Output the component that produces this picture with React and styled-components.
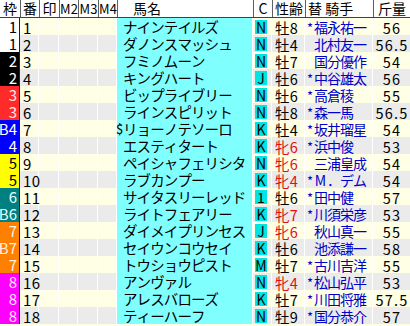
import React from "react";
import styled, { createGlobalStyle } from "styled-components";

const GlobalStyle = createGlobalStyle`
  html, body {
    margin: 0;
    padding: 0;
    background: #ffffe6;
  }
  body {
    font-family: "Noto Sans CJK JP", "DejaVu Sans", sans-serif;
  }
`;

const COLS = "20px 19px 20px 19px 20px 19px 136px 19px 33px 68px 37px";

const WAKU = {
  1: { bg: "#ffffff", fg: "#000000" },
  2: { bg: "#000000", fg: "#ffffff" },
  3: { bg: "#ff2b2b", fg: "#ffe8e8" },
  4: { bg: "#0000ff", fg: "#ffffff" },
  5: { bg: "#ffff00", fg: "#000000" },
  6: { bg: "#008080", fg: "#e8ffff" },
  7: { bg: "#ff8000", fg: "#fff4e0" },
  8: { bg: "#ff00ff", fg: "#ffe8ff" },
};

const horses = [
  { w: "1", n: 1, name: "ナインテイルズ", c: "N", sa: "牡8", f: false, m: true, j: "福永祐一", k: "56" },
  { w: "1", n: 2, name: "ダノンスマッシュ", c: "N", sa: "牡4", f: false, m: false, j: "北村友一", k: "56.5" },
  { w: "2", n: 3, name: "フミノムーン", c: "N", sa: "牡7", f: false, m: false, j: "国分優作", k: "54" },
  { w: "2", n: 4, name: "キングハート", c: "J", sa: "牡6", f: false, m: true, j: "中谷雄太", k: "56" },
  { w: "3", n: 5, name: "ビップライブリー", c: "N", sa: "牡6", f: false, m: true, j: "高倉稜", k: "55" },
  { w: "3", n: 6, name: "ラインスピリット", c: "N", sa: "牡8", f: false, m: true, j: "森一馬", k: "56.5" },
  { w: "B4", n: 7, name: "リョーノテソーロ", pre: "$", c: "K", sa: "牡4", f: false, m: true, j: "坂井瑠星", k: "54" },
  { w: "4", n: 8, name: "エスティタート", c: "K", sa: "牝6", f: true, m: true, j: "浜中俊", k: "53" },
  { w: "5", n: 9, name: "ペイシャフェリシタ", c: "N", sa: "牝6", f: true, m: false, j: "三浦皇成", k: "54" },
  { w: "5", n: 10, name: "ラブカンプー", c: "K", sa: "牝4", f: true, m: true, j: "M．デム", k: "54" },
  { w: "6", n: 11, name: "サイタスリーレッド", c: "1", sa: "牡6", f: false, m: true, j: "田中健", k: "57" },
  { w: "B6", n: 12, name: "ライトフェアリー", c: "K", sa: "牝7", f: true, m: true, j: "川須栄彦", k: "53" },
  { w: "7", n: 13, name: "ダイメイプリンセス", c: "J", sa: "牝6", f: true, m: false, j: "秋山真一", k: "55" },
  { w: "B7", n: 14, name: "セイウンコウセイ", c: "K", sa: "牡6", f: false, m: false, j: "池添謙一", k: "58" },
  { w: "7", n: 15, name: "トウショウピスト", c: "M", sa: "牡7", f: false, m: true, j: "古川吉洋", k: "55" },
  { w: "8", n: 16, name: "アンヴァル", c: "N", sa: "牝4", f: true, m: true, j: "松山弘平", k: "53" },
  { w: "8", n: 17, name: "アレスバローズ", c: "K", sa: "牡7", f: false, m: true, j: "川田将雅", k: "57.5" },
  { w: "8", n: 18, name: "ティーハーフ", c: "N", sa: "牡9", f: false, m: true, j: "国分恭介", k: "57" },
];

const Table = styled.div`
  width: 410px;
  background: #ffffe6;
  color: #000;
`;

const HeaderRow = styled.div`
  display: grid;
  grid-template-columns: ${COLS};
  height: 18px;
  background: #ffffff;
  border-bottom: 1px solid #404040;
  box-sizing: border-box;
`;

const HeadCell = styled.div`
  display: flex;
  align-items: center;
  justify-content: ${(p) => p.$align || "center"};
  padding-left: ${(p) => p.$pl || 0}px;
  border-left: ${(p) => (p.$first ? "none" : "1px solid #606060")};
  font-size: ${(p) => p.$size || 14}px;
  line-height: 17px;
  white-space: nowrap;
`;

const Row = styled.div`
  display: grid;
  grid-template-columns: ${COLS};
  height: 17px;
  background: ${(p) => (p.$odd ? "#ffffe6" : "#ebebeb")};
`;

const Cell = styled.div`
  display: flex;
  align-items: center;
  border-right: 1px solid #ffffff;
  font-size: 14px;
  line-height: 17px;
  white-space: nowrap;
  box-sizing: border-box;
`;

const WakuCell = styled(Cell)`
  justify-content: flex-end;
  padding-right: 2px;
  font-size: 15px;
  background: ${(p) => p.$bg};
  color: ${(p) => p.$fg};
  border-right: 1px solid #202020;
  border-bottom: 1px solid ${(p) => (p.$bg === "#ffffff" ? "#c8c8c8" : p.$bg)};
`;

const NumCell = styled(Cell)`
  padding-left: 3px;
  font-size: 15px;
  letter-spacing: 0.3px;
`;

const NameCell = styled(Cell)`
  background: #80ffff;
  padding-left: 6px;
  font-size: 14.5px;
  border-bottom: 1px solid #b8ffff;
`;

const NamePrefix = styled.span`
  display: inline-block;
  width: 7px;
  margin-left: -7px;
  font-size: 13px;
`;

/* fixed-pitch slot so kana line up like the original's monospace font */
const Glyph = styled.span`
  display: inline-block;
  width: ${(p) => p.$w}px;
  text-align: center;
`;

const ClassCell = styled(Cell)`
  padding-left: 2px;
`;

const ClassBox = styled.span`
  display: flex;
  align-items: center;
  justify-content: center;
  width: 12px;
  height: 14px;
  background: #00e4e4;
  font-size: 14px;
  line-height: 14px;
`;

const SexCell = styled(Cell)`
  padding-left: 3px;
  font-size: 14.5px;
  letter-spacing: 0.3px;
  color: ${(p) => (p.$female ? "#e01010" : "#000000")};
`;

const JockeyCell = styled(Cell)`
  color: #0000c8;
  padding-left: 2px;
  font-size: 14px;
`;

const Mark = styled.span`
  display: inline-block;
  width: 7px;
  font-size: 13px;
`;

const WeightCell = styled(Cell)`
  justify-content: center;
  padding-left: 1px;
  font-size: 14.5px;
  letter-spacing: 1.2px;
  border-right: none;
`;

const Spaced = ({ text, w }) =>
  Array.from(text).map((ch, i) => (
    <Glyph key={i} $w={w}>
      {ch}
    </Glyph>
  ));

export default function App() {
  return (
    <>
      <GlobalStyle />
      <Table>
        <HeaderRow>
          <HeadCell $first>枠</HeadCell>
          <HeadCell>番</HeadCell>
          <HeadCell>印</HeadCell>
          <HeadCell $size={13}>M2</HeadCell>
          <HeadCell $size={13}>M3</HeadCell>
          <HeadCell $size={13}>M4</HeadCell>
          <HeadCell $align="flex-start" $pl={15}>馬名</HeadCell>
          <HeadCell>C</HeadCell>
          <HeadCell>性齢</HeadCell>
          <HeadCell $align="flex-start" $pl={2}>替 騎手</HeadCell>
          <HeadCell>斤量</HeadCell>
        </HeaderRow>
        {horses.map((h, i) => {
          const waku = WAKU[h.w.replace("B", "")];
          return (
            <Row key={h.n} $odd={i % 2 === 0}>
              <WakuCell $bg={waku.bg} $fg={waku.fg}>{h.w}</WakuCell>
              <NumCell>{h.n}</NumCell>
              <Cell />
              <Cell />
              <Cell />
              <Cell />
              <NameCell>
                {h.pre && <NamePrefix>{h.pre}</NamePrefix>}
                <Spaced text={h.name} w={13.6} />
              </NameCell>
              <ClassCell>
                <ClassBox>{h.c}</ClassBox>
              </ClassCell>
              <SexCell $female={h.f}>{h.sa}</SexCell>
              <JockeyCell>
                <Mark>{h.m ? "*" : ""}</Mark>
                <Spaced text={h.j} w={13} />
              </JockeyCell>
              <WeightCell>{h.k}</WeightCell>
            </Row>
          );
        })}
      </Table>
    </>
  );
}
